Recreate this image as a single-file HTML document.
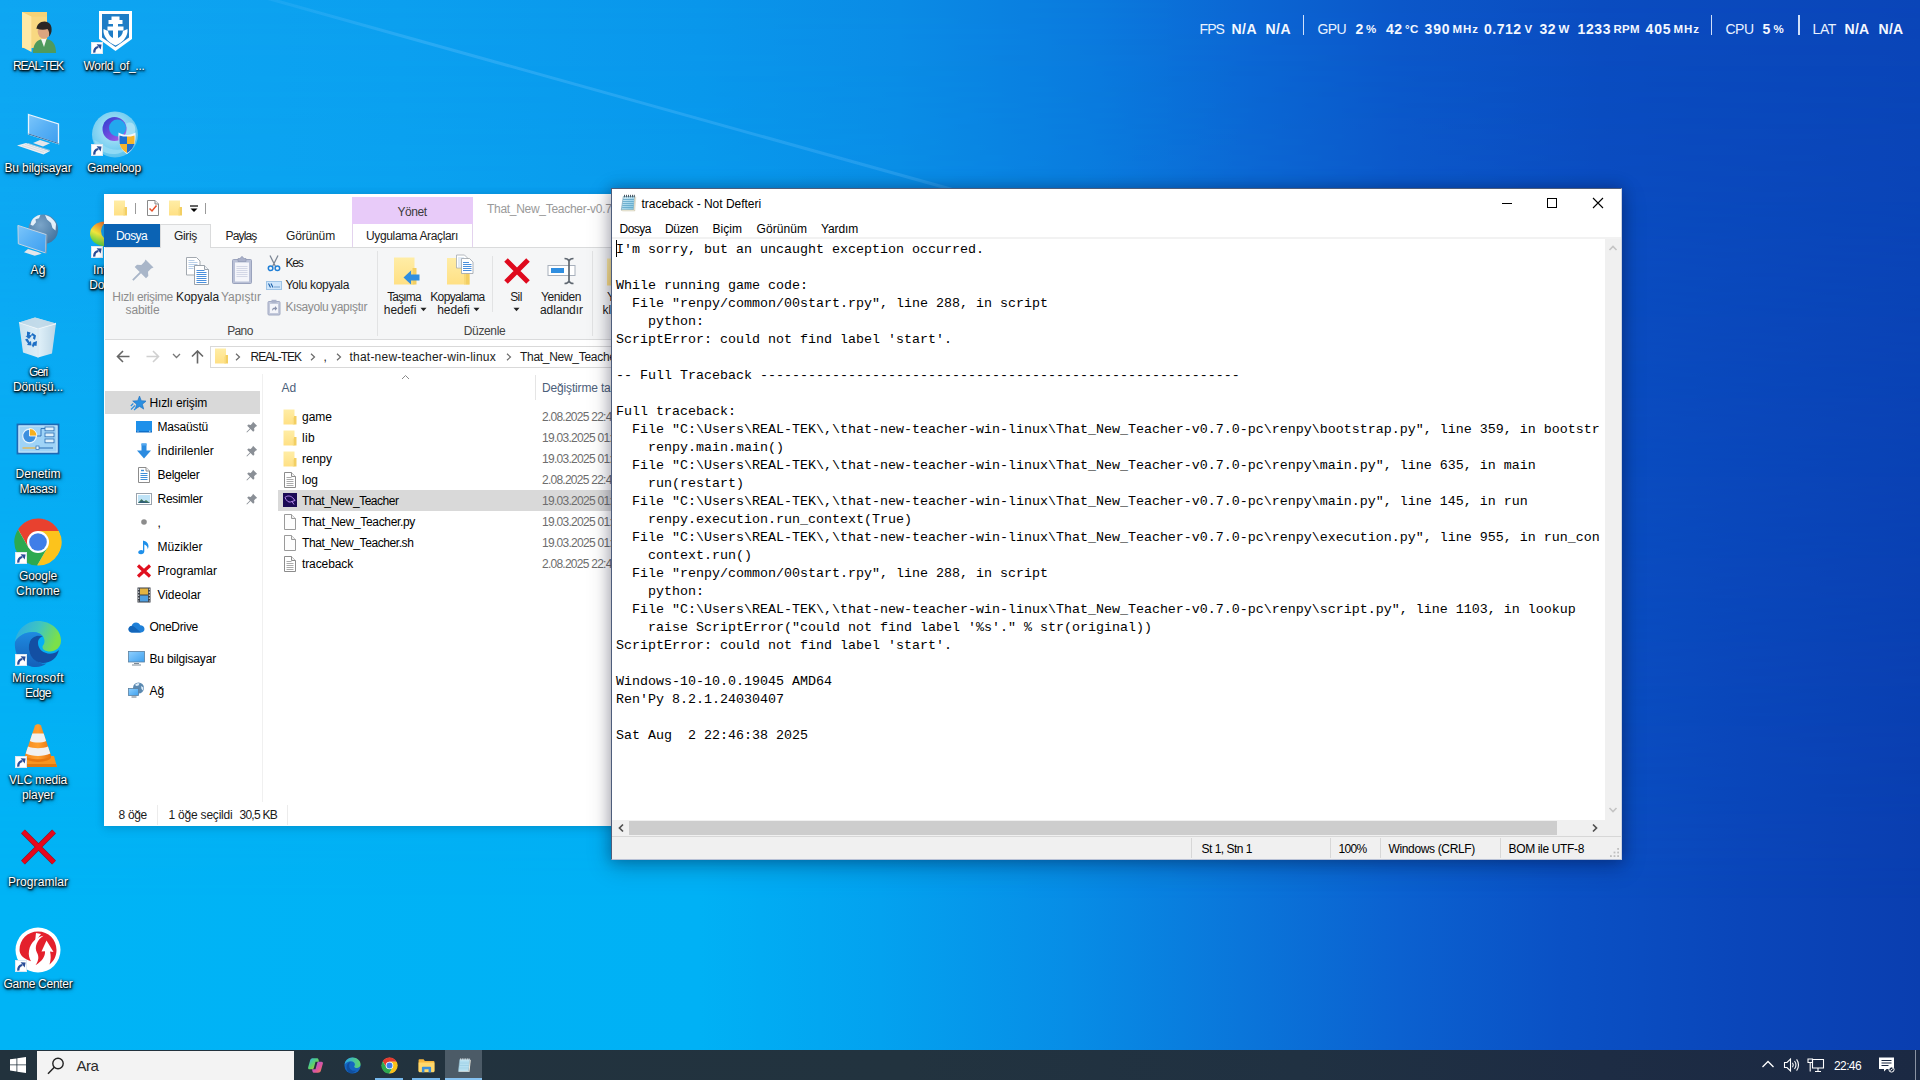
<!DOCTYPE html>
<html lang="tr">
<head>
<meta charset="utf-8">
<title>Masaüstü</title>
<style>
*{box-sizing:border-box;margin:0;padding:0}
html,body{width:1920px;height:1080px;overflow:hidden}
body{position:relative;font-family:"Liberation Sans",sans-serif;font-size:12px;color:#000;background:#0078d7}
.abs{position:absolute}
.t{position:absolute;white-space:pre;line-height:1}
#wall{position:absolute;left:0;top:0;width:1920px;height:1080px;overflow:hidden;
 background:linear-gradient(90deg,#00b4f6 0px,#00b1f5 700px,#03a2ef 880px,#078de6 1070px,#0a76da 1240px,#0b61d0 1400px,#0a51c5 1560px,#0a46ba 1740px,#0a3eb0 1920px)}
#wall .tint{position:absolute;left:0;top:0;width:1920px;height:1080px;
 background:linear-gradient(90deg,#0ea6f2 0px,#0b9fef 400px,#0996eb 700px,#0a8be5 900px,#0a79dd 1100px,#0b66d3 1250px,#0b57c9 1400px,#0a4cc0 1600px,#0a45b8 1920px);
 -webkit-mask-image:linear-gradient(180deg,#000 0px,rgba(0,0,0,.85) 200px,rgba(0,0,0,.35) 600px,rgba(0,0,0,0) 900px);mask-image:linear-gradient(180deg,#000 0px,rgba(0,0,0,.85) 200px,rgba(0,0,0,.35) 600px,rgba(0,0,0,0) 900px)}
#wall .ray{position:absolute;left:150px;top:-36px;width:1400px;height:3px;transform-origin:0 0;transform:rotate(15.6deg);
 background:linear-gradient(90deg,rgba(120,200,255,0),rgba(120,200,255,.28) 20%,rgba(120,200,255,.2) 70%,rgba(120,200,255,0))}
#np-text pre{position:absolute;left:3px;top:2px;font-family:"Liberation Mono",monospace;font-size:13.333px;line-height:18px;color:#000;white-space:pre}
.dl{position:absolute;width:90px;text-align:center;color:#fff;font-size:12px;line-height:15px;white-space:pre;
 text-shadow:0 1px 2px rgba(0,0,0,.95),1px 1px 2px rgba(0,0,0,.9),0 0 3px rgba(0,0,0,.55)}
#taskbar-bg{position:absolute;left:0;top:1050px;width:1920px;height:30px;
 background:linear-gradient(90deg,#22323d 0,#22333f 900px,#203142 1300px,#1d2c44 1600px,#1b2943 1920px)}
.dl2{text-shadow:0 1px 2px rgba(0,0,0,.95),1px 1px 2px rgba(0,0,0,.9),1px 2px 4px rgba(0,0,0,.6),0 0 3px rgba(0,0,0,.55)}

</style>
</head>
<body>
<svg width="0" height="0" style="position:absolute">
<defs>
<linearGradient id="gFold" x1="0" y1="0" x2="0" y2="1"><stop offset="0" stop-color="#ffedA6"/><stop offset="1" stop-color="#ffe084"/></linearGradient>
<linearGradient id="gMon" x1="0" y1="0" x2="1" y2="1"><stop offset="0" stop-color="#8ed0ff"/><stop offset="1" stop-color="#3fa0ee"/></linearGradient>
<symbol id="fold16" viewBox="0 0 14 16"><path d="M.5 .5h11v15H.5z" fill="url(#gFold)"/><path d="M11 7h2.500v8.500H11z" fill="#f3cf63"/><path d="M9.800 8.500H11v7H9.800z" fill="#f8dc80"/></symbol>
<symbol id="doc16" viewBox="0 0 14 16"><path d="M1.500 .5h7l4 4v11h-11z" fill="#fff" stroke="#8c8c8c"/><path d="M8.500 .5v4h4" fill="#f2f2f2" stroke="#8c8c8c"/><path d="M3.500 5.500h5M3.500 7.500h7M3.500 9.500h7M3.500 11.500h7M3.500 13.500h7" stroke="#a0a0a0" stroke-width=".9"/></symbol>
<symbol id="blank16" viewBox="0 0 14 16"><path d="M1.500 .5h7l4 4v11h-11z" fill="#fdfdfd" stroke="#9a9a9a"/><path d="M8.500 .5v4h4" fill="#eee" stroke="#9a9a9a"/></symbol>
<symbol id="pin12" viewBox="0 0 12 12"><path d="M7 .8l4.200 4.200-1.300.5-1.800 1.800.3 2.300-1.200 1.200L4.500 8.100 1 11.600.4 11l3.500-3.500L1.200 4.800l1.200-1.200 2.300.3L6.500 2.100z" fill="#8a8f96"/></symbol>
<symbol id="sc" viewBox="0 0 12 12"><rect x=".5" y=".5" width="11" height="11" fill="#fff" stroke="#dbe8f3"/><path d="M3.300 10.600C3.100 7.600 4.600 5.600 7.300 5" fill="none" stroke="#2a4d98" stroke-width="2.300"/><path d="M5.600 2.300l5 .2-.9 5z" fill="#2a4d98"/></symbol>
</defs></svg>
<div id="wall"><div class="tint"></div><div class="ray"></div></div>
<div id="desktop">
<svg class="abs" style="left:14px;top:8px" width="48" height="48" viewBox="0 0 48 48"><path d="M8 4h25v36H8z" fill="#f6d276"/><path d="M8 4l9.500 4.500V44L8 39z" fill="#ffe9a6"/><path d="M17.500 8.500H33V40H17.500z" fill="#f9dc8a" opacity=".55"/>
<path d="M19 45c0-8 3-14 11.500-14S42 37 42 45z" fill="#4f9a5c"/><path d="M27 31l3 8 2.500-8z" fill="#f4f4f0"/>
<g transform="translate(0 1.500)"><ellipse cx="30" cy="22" rx="6.300" ry="7.300" fill="#dca57f"/><path d="M22.500 20c0-5 3.500-8 8-8s8 3.500 7 10c-.8 3-1.500 4-2.500 5 .5-3 0-6-1.500-7.500-3 1-7 1-11-.5z" fill="#2a2624"/></g></svg>
<span class="t dl2" style="left:13.0px;top:60px;font-size:12px;letter-spacing:-1.09px;color:#fff;">REAL-TEK</span>
<svg class="abs" style="left:90px;top:8px" width="48" height="48" viewBox="0 0 48 48"><path d="M9 3h33v28L25.500 43 9 31z" fill="#fff"/><path d="M12 6h27v23.500L25.500 39 12 29.500z" fill="#1f7dc6"/>
<path d="M21.500 8.500h8v3.500h3v4h-4.500v2.500h5.500v4h-5.500v7.500c2.500-1 4.500-3.500 5-7l4.500-2v3c-1 6-5 10.500-12 13.500-7-3-11-7.500-12-13.500v-3l4.500 2c.5 3.500 2.500 6 5 7V22.500H17.500v-4H23V16h-4.500v-4h3z" fill="#fff"/></svg>
<svg class="abs" style="left:90.5px;top:42px" width="12" height="12"><use href="#sc"/></svg>
<span class="t dl2" style="left:83.5px;top:60px;font-size:12px;letter-spacing:-0.29px;color:#fff;">World_of_...</span>
<svg class="abs" style="left:14px;top:110px" width="48" height="48" viewBox="0 0 48 48"><defs><linearGradient id="pcg" x1="0" y1="0" x2="1" y2="1"><stop offset="0" stop-color="#7cc6fb"/><stop offset=".5" stop-color="#58b0f5"/><stop offset="1" stop-color="#3d9ff0"/></linearGradient></defs>
<path d="M14.500 4.500L44.500 14v19.500L14.500 24z" fill="url(#pcg)" stroke="#e9f4fc" stroke-width="1.300"/><path d="M14.500 24L44.500 33.500" stroke="#3a6fa3" stroke-width="1"/>
<path d="M26 30l10 3.200-7 3.300-10-3.500z" fill="#e4e6ea"/><path d="M12 33l24 8-6.500 3.500L3 35.500z" fill="#eceef1"/><path d="M8 35.500l22 7M11 34.300l22 7.200M14 33.500l22 7" stroke="#cfd3d8" stroke-width=".7"/></svg>
<span class="t dl2" style="left:4.5px;top:162px;font-size:12px;letter-spacing:-0.13px;color:#fff;">Bu bilgisayar</span>
<svg class="abs" style="left:90px;top:110px" width="48" height="48" viewBox="0 0 48 48"><defs><radialGradient id="glg" cx=".45" cy=".4" r=".6"><stop offset="0" stop-color="#bfeaf9"/><stop offset="1" stop-color="#5cc4ee"/></radialGradient><linearGradient id="glp" x1="0" y1="0" x2="1" y2="1"><stop offset="0" stop-color="#2a3fd0"/><stop offset=".6" stop-color="#7a4fe0"/><stop offset="1" stop-color="#b565e8"/></linearGradient></defs>
<circle cx="25" cy="24.500" r="23" fill="url(#glg)"/><path d="M4 30c2 8 10 14 19 14 6 0 11-2 14-6-8 3-18 2-24-3-3-2-6-4-9-5z" fill="#8fdaf5"/>
<circle cx="24.500" cy="19" r="12" fill="url(#glp)"/><circle cx="27.500" cy="18" r="8.500" fill="#23a8ee"/><path d="M36 14c4-3 8-1 9 3 1 5-1 9-5 12l-5-3c2-4 3-8 1-12z" fill="#a5e0f6"/>
<path d="M37 25c3 0 6-1 8.500-2.500 .7 10-2 17-8.500 21.500-6.500-4.500-9.200-11.500-8.500-21.500C31 24 34 25 37 25z" fill="#f3f6fa"/><path d="M37 26.500V34h-7.300c-.4-2.500-.4-5-.2-8.500 2.500 1 5 1 7.500 1zM37 34h7.300c-1 4-3.500 7-7.300 9z" fill="#1c6fd0"/><path d="M37 26.500c2.500 0 5 0 7.500-1 .2 3.500.2 6-.2 8.500H37zM37 34v9c-3.800-2-6.300-5-7.300-9z" fill="#f6b42c"/></svg>
<svg class="abs" style="left:90.5px;top:144px" width="12" height="12"><use href="#sc"/></svg>
<span class="t dl2" style="left:87.0px;top:162px;font-size:12px;letter-spacing:-0.17px;color:#fff;">Gameloop</span>
<svg class="abs" style="left:14px;top:212px" width="48" height="48" viewBox="0 0 48 48"><defs><radialGradient id="ngl" cx=".4" cy=".35" r=".75"><stop offset="0" stop-color="#7ba5c9"/><stop offset="1" stop-color="#3f6f9a"/></radialGradient></defs>
<circle cx="29.300" cy="17.400" r="14.800" fill="url(#ngl)"/><path d="M17.500 9c1.500-3 5-5.500 9-6.200l-1.500 3.500-3.500 1 .5 3-3 3.500-2.500-1zM31 3c5 1 9 4.500 11 9l-.5 6.500-3-2.500-1.500-5-4-3.500z" fill="#e3f0fa"/>
<path d="M3.900 13.400l28.400 9.200-.9 18.300L4.300 31.750z" fill="url(#pcg)" stroke="#c3d3e2" stroke-width="1"/><path d="M31.400 40.900l.9-18.300 1.200.6-.9 18.200z" fill="#7d97b3"/><path d="M14 37l10 3 3.700 1.700-7 2-10.700-3.500z" fill="#e4e6ea"/></svg>
<span class="t dl2" style="left:30.5px;top:264px;font-size:12px;letter-spacing:0.16px;color:#fff;">Ağ</span>
<svg class="abs" style="left:90px;top:212px" width="48" height="48" viewBox="0 0 48 48"><defs><linearGradient id="idg" x1=".8" y1="0" x2=".2" y2="1"><stop offset="0" stop-color="#e8482a"/><stop offset=".35" stop-color="#f0a030"/><stop offset=".6" stop-color="#efe63c"/><stop offset="1" stop-color="#35c545"/></linearGradient></defs><ellipse cx="15" cy="21.750" rx="15" ry="12.300" fill="url(#idg)"/><ellipse cx="16.500" cy="23.500" rx="12" ry="8" fill="#8fdc3c" opacity=".0"/><circle cx="20.500" cy="19" r="9.500" fill="#12a0ec"/><path d="M13 14c2-2 6-3 9-2l3 8-7 6c-3-1-5-3-6-6z" fill="#12a0ec"/></svg>
<svg class="abs" style="left:90.5px;top:246px" width="12" height="12"><use href="#sc"/></svg>
<span class="t dl2" style="left:93.0px;top:264px;font-size:12px;letter-spacing:0.16px;color:#fff;">Internet</span><span class="t dl2" style="left:89.2px;top:279px;font-size:12px;letter-spacing:-0.06px;color:#fff;">Downlo...</span>
<svg class="abs" style="left:14px;top:314px" width="48" height="48" viewBox="0 0 48 48"><defs><linearGradient id="bng" x1="0" y1="0" x2="1" y2="0"><stop offset="0" stop-color="#d9e6ef"/><stop offset=".55" stop-color="#eef4f8"/><stop offset="1" stop-color="#c9d9e5"/></linearGradient></defs>
<g transform="translate(0 -1.500) scale(1 1)"><path d="M5 10L21 5l21 6-4 30-14 4-15-5z" fill="url(#bng)" opacity=".93"/><path d="M5 10l19 6 18-5" fill="none" stroke="#f6fafc" stroke-width="1.300"/><path d="M24 16v29" stroke="#dbe6ee" stroke-width="1"/><path d="M5 10L21 5l21 6-18 5z" fill="#bcd6e6" opacity=".8"/>
<g fill="#1e6fc5"><path d="M13 19l3.500 1-1 2.500 2.500.5-3 3.500-3.500-3 1.500-.3zM18.500 20.500l3.500 2.500-1 4.500-2-1.500.5-2.500-2.500-1zM11 27l2.500-1 2 3.500 1.500-1 .5 4.500-4.500-.5 1-1.500zM18 33l1-3 4-1.500-.5 5-2-.5-1.500 2z"/></g></g></svg>
<span class="t dl2" style="left:29.0px;top:366px;font-size:12px;letter-spacing:-1.17px;color:#fff;">Geri</span><span class="t dl2" style="left:13.0px;top:381px;font-size:12px;letter-spacing:-0.15px;color:#fff;">Dönüşü...</span>
<svg class="abs" style="left:14px;top:416px" width="48" height="48" viewBox="0 0 48 48"><g transform="translate(0 4)"><rect x="3.500" y="4.500" width="41" height="29" fill="#9fd3f7" stroke="#1d69b5" stroke-width="1.800"/><rect x="5" y="6" width="38" height="26" fill="none" stroke="#c9e8fb" stroke-width="1"/>
<circle cx="15.500" cy="16" r="6.800" fill="#3c8fdf" stroke="#e8f4fc" stroke-width="1.200"/><path d="M15.500 16V8.500a7.500 7.500 0 0 1 7.500 7.500z" fill="#f6b01e" stroke="#fff" stroke-width=".8"/>
<path d="M23 16h4v-7.500h4" fill="none" stroke="#2a6eb5" stroke-width=".9"/><rect x="31" y="7" width="9" height="3.800" fill="#dff0fb" stroke="#2a6eb5" stroke-width=".8"/><rect x="31" y="13" width="9" height="3.800" fill="#dff0fb" stroke="#2a6eb5" stroke-width=".8"/><rect x="31" y="19" width="9" height="3.800" fill="#dff0fb" stroke="#2a6eb5" stroke-width=".8"/>
<path d="M8.500 28h14" stroke="#f0b23a" stroke-width="1.200"/><path d="M24 28h15" stroke="#2a6eb5" stroke-width="1"/><rect x="22" y="26" width="3" height="3.500" fill="#e8f4fc" stroke="#2a6eb5" stroke-width=".7"/></g></svg>
<span class="t dl2" style="left:15.5px;top:468px;font-size:12px;letter-spacing:0.04px;color:#fff;">Denetim</span><span class="t dl2" style="left:19.5px;top:483px;font-size:12px;letter-spacing:-0.28px;color:#fff;">Masası</span>
<svg class="abs" style="left:14px;top:518px" width="48" height="48" viewBox="0 0 48 48"><circle cx="24" cy="24" r="23" fill="#fff"/><path d="M14.474 29.500L4.091 11.515A23.500 23.500 0 0 1 44.767 13L24 13z" fill="#e8412f"/><path d="M24 13L44.767 13A23.500 23.500 0 0 1 23.143 47.485L33.526 29.500z" fill="#fcc31c"/><path d="M33.526 29.500L23.143 47.485A23.500 23.500 0 0 1 4.091 11.515L14.474 29.500z" fill="#2ca94f"/><circle cx="24" cy="24" r="11" fill="#fff"/><circle cx="24" cy="24" r="8.800" fill="#3f7ee8"/></svg>
<svg class="abs" style="left:14.5px;top:552px" width="12" height="12"><use href="#sc"/></svg>
<span class="t dl2" style="left:19.0px;top:570px;font-size:12px;letter-spacing:-0.12px;color:#fff;">Google</span><span class="t dl2" style="left:16.0px;top:585px;font-size:12px;letter-spacing:0.22px;color:#fff;">Chrome</span>
<svg class="abs" style="left:14px;top:620px" width="48" height="48" viewBox="0 0 48 48"><defs><linearGradient id="edg" x1="0" y1="0" x2="1" y2=".3"><stop offset="0" stop-color="#29a6ec"/><stop offset=".55" stop-color="#3fc6c0"/><stop offset="1" stop-color="#7be04a"/></linearGradient><linearGradient id="edb" x1="0" y1="0" x2="0" y2="1"><stop offset="0" stop-color="#1f8ae0"/><stop offset="1" stop-color="#1460b8"/></linearGradient></defs>
<path d="M1 22C2.500 10 12 1 24 1c13 0 23 9 23 19.500 0 7-5.500 11-11 11-5 0-7.500-2.300-7.500-4.500 0-1.800 2-2.500 2-6 0-5-4.500-9-11.500-9C11 12 4 16 1 22z" fill="url(#edg)"/>
<path d="M1 22c3-6 10-10 18-10 4.500 0 8 1.800 10 4.500-6-2-11.500.5-13.500 6-2 5.500.5 13 6.500 18 3 2.300 7 3.500 10.500 3-3 2.300-6.500 3.500-10.500 3.500C10 47-.5 36 1 22z" fill="url(#edb)"/>
<path d="M15.500 22.500c2-5.500 7.500-8 13.500-6-3 .5-5 3-5 6.500 0 7 7 11.500 14 10.500 3-.5 5.500-2 7-3.500-2 8-8 13-16 13-6 0-11-4-13-9.500-1.500-4-1.500-8-.5-11z" fill="#134fa3"/></svg>
<svg class="abs" style="left:14.5px;top:654px" width="12" height="12"><use href="#sc"/></svg>
<span class="t dl2" style="left:12.0px;top:672px;font-size:12px;letter-spacing:0.37px;color:#fff;">Microsoft</span><span class="t dl2" style="left:25.0px;top:687px;font-size:12px;letter-spacing:-0.51px;color:#fff;">Edge</span>
<svg class="abs" style="left:14px;top:722px" width="48" height="48" viewBox="0 0 48 48"><defs><linearGradient id="vlo" x1="0" y1="0" x2="1" y2="0"><stop offset="0" stop-color="#f58a1f"/><stop offset=".5" stop-color="#ff9f2e"/><stop offset="1" stop-color="#e8730f"/></linearGradient></defs>
<path d="M8 34l-3 11h38l-3-11z" fill="#f79420"/><path d="M5 45h38l-1-3H6z" fill="#e07a10"/><ellipse cx="24" cy="35" rx="13" ry="5" fill="#e8780f"/>
<path d="M21 3.500c1.500-1.800 4.500-1.800 6 0l10 30c-3 5-23 5-26 0z" fill="url(#vlo)"/><path d="M18.300 11.500h11.400l2.400 7.500c-4 2-12.200 2-16.200 0zM14 24.500c5 2.300 15 2.300 20 0l2.300 7c-6 3.300-18.600 3.300-24.600 0z" fill="#f1f1f1"/></svg>
<svg class="abs" style="left:14.5px;top:756px" width="12" height="12"><use href="#sc"/></svg>
<span class="t dl2" style="left:9.0px;top:774px;font-size:12px;letter-spacing:-0.15px;color:#fff;">VLC media</span><span class="t dl2" style="left:22.0px;top:789px;font-size:12px;letter-spacing:-0.11px;color:#fff;">player</span>
<svg class="abs" style="left:14px;top:824px" width="48" height="48" viewBox="0 0 48 48"><path d="M9 7.500l31 31M40 7.500l-31 31" stroke="#8a1828" stroke-width="5.400"/><path d="M9 7.500l31 31M40 7.500l-31 31" stroke="#e8061c" stroke-width="4.200"/></svg>
<span class="t dl2" style="left:8.0px;top:876px;font-size:12px;letter-spacing:0.06px;color:#fff;">Programlar</span>
<svg class="abs" style="left:14px;top:926px" width="48" height="48" viewBox="0 0 48 48"><circle cx="24" cy="24" r="22.500" fill="#fff"/><path d="M24 5.500c10.500 0 18.500 8 18.500 18.500 0 6-2.500 11-7 14.500 1.500-5 1.500-9 .5-13l3.500.5-7-11.500-5 11 3.500-.3c.5 5-3 10-9.500 14 3.500-5 3.500-9 1.500-12.500-3-5.500 0-13 6.500-17-6 1-13 6-14.500 15-.7 4 .3 7.500 2 10.500C10 33 5.500 29 5.500 24 5.500 13.500 13.500 5.500 24 5.500z" fill="#e4202c"/><path d="M22 7l5 1-6 8z" fill="#fff"/></svg>
<svg class="abs" style="left:14.5px;top:960px" width="12" height="12"><use href="#sc"/></svg>
<span class="t dl2" style="left:3.5px;top:978px;font-size:12px;letter-spacing:-0.28px;color:#fff;">Game Center</span>
</div>
<div id="explorer">
<div class="abs" style="left:104px;top:194px;width:640px;height:632px;background:#fff;box-shadow:0 0 8px rgba(0,0,40,.10),0 3px 10px rgba(0,0,40,.10);"></div>
<svg class="abs" style="left:113px;top:200px" width="15" height="16"><use href="#fold16"/></svg>
<div class="abs" style="left:135px;top:203px;width:1px;height:11px;background:#9a9a9a;"></div>
<svg class="abs" style="left:146px;top:200px" width="14" height="16" viewBox="0 0 14 16"><path d="M1.500 .5h7.500l3.500 3.500v11.500h-11z" fill="#fff" stroke="#8a8a8a"/><path d="M9 .5v3.500h3.500" fill="#eee" stroke="#8a8a8a"/><path d="M3.500 8.500l2.500 2.500 4.500-5.500" fill="none" stroke="#e8502a" stroke-width="1.5"/></svg>
<svg class="abs" style="left:168px;top:200px" width="15" height="16"><use href="#fold16"/></svg>
<svg class="abs" style="left:189px;top:205px" width="10" height="8" viewBox="0 0 10 8"><path d="M1 1h8" stroke="#000" stroke-width="1.2"/><path d="M1.500 3.500h7L5 7z" fill="#000"/></svg>
<div class="abs" style="left:205px;top:203px;width:1px;height:11px;background:#9a9a9a;"></div>
<div class="abs" style="left:352px;top:197px;width:121px;height:27px;background:#e8cbf9;"></div>
<span class="t" style="left:397.5px;top:206px;font-size:12px;letter-spacing:-0.47px;color:#3a3a3a;">Yönet</span>
<span class="t" style="left:487.0px;top:203px;font-size:12px;letter-spacing:-0.29px;color:#9a9a9a;">That_New_Teacher-v0.7.0-pc</span>
<div class="abs" style="left:104px;top:224px;width:56px;height:23px;background:#0b63b4;"></div>
<span class="t" style="left:116.0px;top:230px;font-size:12px;letter-spacing:-0.60px;color:#fff;">Dosya</span>
<div class="abs" style="left:105px;top:247px;width:640px;height:1px;background:#dadbdc;"></div>
<div class="abs" style="left:160px;top:224px;width:51px;height:24px;background:#f5f6f7;border:1px solid #dadbdc;border-bottom:none"></div>
<span class="t" style="left:174.0px;top:230px;font-size:12px;letter-spacing:-0.33px;color:#222;">Giriş</span>
<span class="t" style="left:225.5px;top:230px;font-size:12px;letter-spacing:-0.84px;color:#222;">Paylaş</span>
<span class="t" style="left:286.0px;top:230px;font-size:12px;letter-spacing:-0.15px;color:#222;">Görünüm</span>
<div class="abs" style="left:352px;top:224px;width:121px;height:23px;background:#fff;border-left:1px solid #e3d3ee;border-right:1px solid #e3d3ee"></div>
<span class="t" style="left:366.0px;top:230px;font-size:12px;letter-spacing:-0.36px;color:#222;">Uygulama Araçları</span>
<div class="abs" style="left:105px;top:248px;width:640px;height:91px;background:#f5f6f7;"></div>
<div class="abs" style="left:105px;top:339px;width:640px;height:1px;background:#dadbdc;"></div>
<svg class="abs" style="left:131px;top:258px" width="24" height="24" viewBox="0 0 24 24"><path d="M14.500 1.500l8 8-2.300 1-3.200 3.200.3 4.300-2.300 2.300-5-5L2.500 22.800 1.200 21.500l7.500-7.500-5-5L6 6.700l4.300.3L13.500 3.800z" fill="#a9b6c9"/></svg>
<span class="t" style="left:112.2px;top:291px;font-size:12px;letter-spacing:-0.42px;color:#8c8c8c;">Hızlı erişime</span>
<span class="t" style="left:125.5px;top:304px;font-size:12px;letter-spacing:-0.10px;color:#8c8c8c;">sabitle</span>
<svg class="abs" style="left:185px;top:256px" width="26" height="30" viewBox="0 0 26 30"><path d="M1.500 1.500h10l3.500 3.500v14h-13.500z" fill="#fff" stroke="#a3a9b0"/><path d="M3.500 6.500h9M3.500 8.500h9M3.500 10.500h9M3.500 12.500h5M3.500 4.500h6" stroke="#b9cfe8" stroke-width="1"/><path d="M9.500 9.500h10l4 4v15h-14z" fill="#fff" stroke="#9aa2ab"/><path d="M19.500 9.500v4h4" fill="#eef2f6" stroke="#9aa2ab"/><path d="M11.500 14.500h8M11.500 16.500h10M11.500 18.500h10M11.500 20.500h10M11.500 22.500h10M11.500 24.500h10M11.500 26.500h10" stroke="#4a8fdc" stroke-width="1.1"/></svg>
<span class="t" style="left:176.0px;top:291px;font-size:12px;letter-spacing:-0.05px;color:#1a1a1a;">Kopyala</span>
<svg class="abs" style="left:231px;top:255px" width="22" height="30" viewBox="0 0 22 30"><rect x="1.500" y="4.500" width="19" height="24" rx="1" fill="#b9c0d6" stroke="#9aa3bd"/><rect x="4" y="7.500" width="14" height="19" fill="#f4f5fa"/><path d="M5.500 11.500h11M5.500 13.500h11M5.500 15.500h11M5.500 17.500h11M5.500 19.500h11M5.500 21.500h11" stroke="#d3d7e6" stroke-width="1"/><path d="M7 3.500h2.500c0-2.500 3-2.500 3 0H15v3H7z" fill="#a9b0c9" stroke="#8f98b3" stroke-width=".7"/></svg>
<span class="t" style="left:221.0px;top:291px;font-size:12px;letter-spacing:-0.06px;color:#8c8c8c;">Yapıştır</span>
<svg class="abs" style="left:267px;top:255px" width="14" height="17" viewBox="0 0 14 17"><path d="M3 .5l5.500 11M11 .5L5.500 11.500" stroke="#7c8694" stroke-width="1.300" fill="none"/><circle cx="3.600" cy="13.300" r="2.300" fill="none" stroke="#1f7fd6" stroke-width="1.500"/><circle cx="10.400" cy="13.300" r="2.300" fill="none" stroke="#1f7fd6" stroke-width="1.500"/></svg>
<span class="t" style="left:285.5px;top:257px;font-size:12px;letter-spacing:-1.23px;color:#1a1a1a;">Kes</span>
<svg class="abs" style="left:266px;top:281px" width="16" height="9" viewBox="0 0 16 9"><rect x=".5" y=".5" width="15" height="8" fill="#cfe6fb" stroke="#9ec4e6"/><path d="M2.500 2.500l2 4M5 2.500l2 4" stroke="#1a5fa8" stroke-width="1.100"/><path d="M8.500 6h1M10.500 6h1M12.500 6h1" stroke="#1a5fa8" stroke-width="1.200"/></svg>
<span class="t" style="left:285.5px;top:279px;font-size:12px;letter-spacing:-0.34px;color:#1a1a1a;">Yolu kopyala</span>
<svg class="abs" style="left:267px;top:299px" width="14" height="17" viewBox="0 0 14 17"><rect x="1" y="2.500" width="12" height="13.500" rx="1" fill="#c3c9db" stroke="#a1a9c2"/><rect x="3" y="5" width="8" height="9" fill="#f4f5fa"/><rect x="4.500" y=".8" width="5" height="3" fill="#aab1c9"/><path d="M5 12c0-2.500 1-3.500 3-3.500V7l2.300 2.400L8 11.800v-1.500c-1.300 0-2.200.4-3 1.700z" fill="#8b93ad"/></svg>
<span class="t" style="left:285.5px;top:301px;font-size:12px;letter-spacing:-0.42px;color:#8c8c8c;">Kısayolu yapıştır</span>
<span class="t" style="left:227.2px;top:325px;font-size:12px;letter-spacing:-0.63px;color:#444;">Pano</span>
<div class="abs" style="left:377px;top:251px;width:1px;height:85px;background:#e2e3e4;"></div>
<svg class="abs" style="left:393px;top:256px" width="28" height="30" viewBox="0 0 28 30"><path d="M1 1.500h20.500v27H1z" fill="url(#gFold)"/><path d="M19.500 12h4v16.500h-4z" fill="#f3cf63"/><path d="M18 14h1.500v14.500H18z" fill="#f7d978"/><path d="M10.500 21.500l7.500-7v4h8.500v6H18v4z" fill="#2f8ee0"/></svg>
<span class="t" style="left:387.2px;top:291px;font-size:12px;letter-spacing:-0.86px;color:#1a1a1a;">Taşıma</span>
<span class="t" style="left:383.8px;top:304px;font-size:12px;letter-spacing:-0.03px;color:#1a1a1a;">hedefi</span>
<svg class="abs" style="left:420px;top:307px" width="7" height="5" viewBox="0 0 7 5"><path d="M.5 .8h6L3.500 4.300z" fill="#222"/></svg>
<svg class="abs" style="left:446px;top:254px" width="28" height="32" viewBox="0 0 28 32"><path d="M1 4h22.500v26.500H1z" fill="url(#gFold)"/><path d="M19.500 16h4v14.500h-4z" fill="#f3cf63"/><path d="M18 18h1.500v12.500H18z" fill="#f7d978"/><path d="M10.500 1h8l3 3v10h-11z" fill="#fff" stroke="#a3a9b0" stroke-width=".8"/><path d="M12 4h6M12 6h8M12 8h8M12 10h8M12 12h8" stroke="#c0d4ea" stroke-width=".9"/><path d="M15.500 4.500h8l3.500 3.500v11.500H15.500z" fill="#fff" stroke="#9aa2ab" stroke-width=".8"/><path d="M17 8.500h6M17 10.500h8.500M17 12.500h8.500M17 14.500h8.500M17 16.500h8.500" stroke="#4a8fdc" stroke-width="1"/></svg>
<span class="t" style="left:430.2px;top:291px;font-size:12px;letter-spacing:-0.62px;color:#1a1a1a;">Kopyalama</span>
<span class="t" style="left:437.2px;top:304px;font-size:12px;letter-spacing:-0.03px;color:#1a1a1a;">hedefi</span>
<svg class="abs" style="left:473px;top:307px" width="7" height="5" viewBox="0 0 7 5"><path d="M.5 .8h6L3.500 4.300z" fill="#222"/></svg>
<div class="abs" style="left:492px;top:256px;width:1px;height:56px;background:#e2e3e4;"></div>
<svg class="abs" style="left:503px;top:257px" width="28" height="28" viewBox="0 0 28 28"><path d="M3 3l22 22M25 3L3 25" stroke="#df0a1e" stroke-width="5"/></svg>
<span class="t" style="left:510.2px;top:291px;font-size:12px;letter-spacing:-0.61px;color:#1a1a1a;">Sil</span>
<svg class="abs" style="left:512.5px;top:307px" width="7" height="5" viewBox="0 0 7 5"><path d="M.5 .8h6L3.500 4.300z" fill="#222"/></svg>
<svg class="abs" style="left:547px;top:257px" width="30" height="28" viewBox="0 0 30 28"><rect x="1" y="8.500" width="27" height="10" fill="#fff" stroke="#a8b0bc"/><rect x="4" y="11" width="13" height="5" fill="#2f8ee0"/><path d="M17.500 1.500c3 0 4 1 4.500 2.500 .5-1.500 1.500-2.500 4.500-2.500M17.500 26.500c3 0 4-1 4.500-2.500 .5 1.500 1.500 2.500 4.500 2.500M22 4v20" fill="none" stroke="#5f6770" stroke-width="1.700"/></svg>
<span class="t" style="left:541.0px;top:291px;font-size:12px;letter-spacing:-0.42px;color:#1a1a1a;">Yeniden</span>
<span class="t" style="left:540.0px;top:304px;font-size:12px;letter-spacing:-0.05px;color:#1a1a1a;">adlandır</span>
<span class="t" style="left:463.8px;top:325px;font-size:12px;letter-spacing:-0.36px;color:#444;">Düzenle</span>
<div class="abs" style="left:592px;top:251px;width:1px;height:85px;background:#e2e3e4;"></div>
<svg class="abs" style="left:606px;top:257px" width="28" height="30" viewBox="0 0 28 30"><path d="M1 1.500h20.500v27H1z" fill="url(#gFold)"/><path d="M19.500 12h4v16.500h-4z" fill="#f3cf63"/></svg>
<span class="t" style="left:607.0px;top:291px;font-size:12px;color:#1a1a1a;">Yeni</span>
<span class="t" style="left:602.5px;top:304px;font-size:12px;color:#1a1a1a;">klasör</span>
<svg class="abs" style="left:116px;top:350px" width="14" height="13" viewBox="0 0 14 13"><path d="M7 1L1.500 6.500 7 12M1.500 6.500H13.500" fill="none" stroke="#666" stroke-width="1.600"/></svg>
<svg class="abs" style="left:146px;top:350px" width="14" height="13" viewBox="0 0 14 13"><path d="M7 1l5.500 5.500L7 12M12.500 6.500H.5" fill="none" stroke="#d0d0d0" stroke-width="1.600"/></svg>
<svg class="abs" style="left:172px;top:353px" width="9" height="6" viewBox="0 0 9 6"><path d="M1 1l3.500 3.500L8 1" fill="none" stroke="#777" stroke-width="1.300"/></svg>
<svg class="abs" style="left:191px;top:350px" width="13" height="14" viewBox="0 0 13 14"><path d="M1 6.500L6.500 1 12 6.500M6.500 1v12.500" fill="none" stroke="#666" stroke-width="1.600"/></svg>
<div class="abs" style="left:210px;top:346px;width:540px;height:22px;background:#fff;border:1px solid #d9d9d9"></div>
<svg class="abs" style="left:214px;top:348px" width="15" height="16"><use href="#fold16"/></svg>
<svg class="abs" style="left:235px;top:353px" width="6" height="8" viewBox="0 0 6 8"><path d="M1 .8l3.500 3.200L1 7.200" fill="none" stroke="#6a6a6a" stroke-width="1.200"/></svg>
<svg class="abs" style="left:310px;top:353px" width="6" height="8" viewBox="0 0 6 8"><path d="M1 .8l3.500 3.200L1 7.200" fill="none" stroke="#6a6a6a" stroke-width="1.200"/></svg>
<svg class="abs" style="left:335.5px;top:353px" width="6" height="8" viewBox="0 0 6 8"><path d="M1 .8l3.500 3.200L1 7.200" fill="none" stroke="#6a6a6a" stroke-width="1.200"/></svg>
<svg class="abs" style="left:506px;top:353px" width="6" height="8" viewBox="0 0 6 8"><path d="M1 .8l3.500 3.200L1 7.200" fill="none" stroke="#6a6a6a" stroke-width="1.200"/></svg>
<span class="t" style="left:250.5px;top:351px;font-size:12px;letter-spacing:-1.02px;color:#1a1a1a;">REAL-TEK</span>
<span class="t" style="left:323.5px;top:351px;font-size:12px;color:#1a1a1a;">,</span>
<span class="t" style="left:349.5px;top:351px;font-size:12px;letter-spacing:0.22px;color:#1a1a1a;">that-new-teacher-win-linux</span>
<span class="t" style="left:520.0px;top:351px;font-size:12px;letter-spacing:-0.29px;color:#1a1a1a;">That_New_Teacher-v0.7.0-pc</span>
<div class="abs" style="left:105px;top:391px;width:155px;height:23px;background:#d9d9d9;"></div>
<div class="abs" style="left:262px;top:374px;width:1px;height:428px;background:#f0f0f0;"></div>
<svg class="abs" style="left:130px;top:395px" width="16" height="16" viewBox="0 0 16 16"><path d="M9.500 1l1.800 4.700 5 .3-3.900 3.200 1.300 4.900-4.200-2.700-4.200 2.700 1.300-4.900L2.700 6l5-.3z" fill="#2b8fe0" stroke="#1c6fc0" stroke-width=".6"/><path d="M1 14.500l4-4M.8 11l2.500-2.500M4 15l2.200-2.200" stroke="#2b8fe0" stroke-width="1.100"/></svg>
<span class="t" style="left:149.5px;top:397px;font-size:12px;letter-spacing:-0.15px;color:#000;">Hızlı erişim</span>
<svg class="abs" style="left:136px;top:419px" width="16" height="16" viewBox="0 0 16 16"><rect x="0" y="2" width="16" height="11" fill="#1e90ea"/><rect x="0" y="12" width="16" height="1.500" fill="#0f6fc8"/><path d="M1.500 12.200h1M13 12.200h1.500" stroke="#fff" stroke-width=".8"/></svg>
<span class="t" style="left:157.5px;top:421px;font-size:12px;letter-spacing:-0.19px;color:#000;">Masaüstü</span>
<svg class="abs" style="left:246px;top:421px" width="12" height="12"><use href="#pin12"/></svg>
<svg class="abs" style="left:136px;top:443px" width="16" height="16" viewBox="0 0 16 16"><path d="M5.500 .5h5v7h4.500L8 15.500 1 7.500h4.500z" fill="#2b8be0"/><path d="M5.500 .5h5v2h-5z" fill="#55a8f0"/></svg>
<span class="t" style="left:157.5px;top:445px;font-size:12px;letter-spacing:0.09px;color:#000;">İndirilenler</span>
<svg class="abs" style="left:246px;top:445px" width="12" height="12"><use href="#pin12"/></svg>
<svg class="abs" style="left:136px;top:467px" width="16" height="16" viewBox="0 0 16 16"><path d="M2.500 .5h7.500l3.500 3.500v11.500h-11z" fill="#fff" stroke="#8c8c8c"/><path d="M10 .5v3.500h3.500" fill="#f2f2f2" stroke="#8c8c8c"/><path d="M4.500 6.500h7M4.500 8.500h7M4.500 10.500h7M4.500 12.500h7" stroke="#3f8fd8" stroke-width="1"/><path d="M5 3.500h3" stroke="#3f8fd8" stroke-width="1.400"/></svg>
<span class="t" style="left:157.5px;top:469px;font-size:12px;letter-spacing:-0.25px;color:#000;">Belgeler</span>
<svg class="abs" style="left:246px;top:469px" width="12" height="12"><use href="#pin12"/></svg>
<svg class="abs" style="left:136px;top:491px" width="16" height="16" viewBox="0 0 16 16"><rect x=".5" y="2.500" width="15" height="11" fill="#fff" stroke="#9aa3ad"/><rect x="2" y="4" width="12" height="8" fill="#bfe3f7"/><path d="M2 12l3.500-4 2.500 2.500 2-1.500 4 3z" fill="#4b7f5a"/><path d="M2 12l3.500-2.500L14 12z" fill="#2f5f76"/></svg>
<span class="t" style="left:157.5px;top:493px;font-size:12px;letter-spacing:-0.29px;color:#000;">Resimler</span>
<svg class="abs" style="left:246px;top:493px" width="12" height="12"><use href="#pin12"/></svg>
<svg class="abs" style="left:136px;top:515px" width="16" height="16" viewBox="0 0 16 16"><circle cx="8" cy="7" r="2.800" fill="#8c8c8c"/></svg>
<span class="t" style="left:157.5px;top:517px;font-size:12px;color:#000;">,</span>
<svg class="abs" style="left:136px;top:539px" width="16" height="16" viewBox="0 0 16 16"><path d="M7 1.500c1 .3 5.500 1.500 5.500 5.500 0 1.500-.5 2.500-1 3 .3-2-1-4-3.200-4.600V12.500c0 1.500-1.500 2.800-3.300 2.800S2.200 14.500 2.200 13.300 3.500 11 5.200 11c.6 0 1.300.2 1.800.5z" fill="#1e90ea"/></svg>
<span class="t" style="left:157.5px;top:541px;font-size:12px;letter-spacing:0.04px;color:#000;">Müzikler</span>
<svg class="abs" style="left:136px;top:563px" width="16" height="16" viewBox="0 0 16 16"><path d="M2 2.500l12 11M14 2.500l-12 11" stroke="#e0101f" stroke-width="3.200"/></svg>
<span class="t" style="left:157.5px;top:565px;font-size:12px;letter-spacing:0.01px;color:#000;">Programlar</span>
<svg class="abs" style="left:136px;top:587px" width="16" height="16" viewBox="0 0 16 16"><rect x="1.500" y=".5" width="13" height="15" fill="#3a3f47"/><rect x="4" y="1.500" width="8" height="6" fill="#e3b341"/><rect x="4" y="8.500" width="8" height="6" fill="#4f9fe0"/><path d="M2.700 1.500v13M13.300 1.500v13" stroke="#d8dce0" stroke-width="1" stroke-dasharray="1.500 1.500"/></svg>
<span class="t" style="left:157.5px;top:589px;font-size:12px;letter-spacing:-0.04px;color:#000;">Videolar</span>
<svg class="abs" style="left:128px;top:620px" width="17" height="13" viewBox="0 0 17 13"><path d="M4 12.500c-2 0-3.500-1.300-3.500-3.200 0-1.700 1.300-3 3-3.200C4 4 5.800 2.500 8 2.500c2 0 3.600 1.100 4.300 2.800 2.300 0 4.200 1.500 4.200 3.700 0 2-1.600 3.500-3.700 3.500z" fill="#1f80d8"/><path d="M4 12.500c-2 0-3.500-1.300-3.500-3.200 0-1.700 1.300-3 3-3.200 1-.2 2.200.2 3 .8l6.500 5.600z" fill="#1466ba"/></svg>
<span class="t" style="left:149.5px;top:621px;font-size:12px;letter-spacing:-0.27px;color:#000;">OneDrive</span>
<svg class="abs" style="left:128px;top:651px" width="17" height="15" viewBox="0 0 17 15"><rect x=".5" y=".5" width="16" height="10.500" fill="url(#gMon)" stroke="#5a7fa0" stroke-width=".8"/><path d="M6 12.500h5M4 14h9" stroke="#7d8a96" stroke-width="1.200"/></svg>
<span class="t" style="left:149.5px;top:653px;font-size:12px;letter-spacing:-0.17px;color:#000;">Bu bilgisayar</span>
<svg class="abs" style="left:128px;top:682px" width="17" height="16" viewBox="0 0 17 16"><circle cx="10.500" cy="6" r="5.500" fill="#5b89b0"/><path d="M7 3c1-1.500 3-2 4.500-1.500l-1 2-2 .5zM13 4l2.500 1.500-.5 3-1.500-1.500z" fill="#dfeefa"/><rect x=".5" y="6.500" width="10" height="7" fill="url(#gMon)" stroke="#5a7fa0" stroke-width=".8"/><path d="M3.500 15h5" stroke="#7d8a96" stroke-width="1.200"/></svg>
<span class="t" style="left:149.5px;top:685px;font-size:12px;letter-spacing:-0.09px;color:#000;">Ağ</span>
<span class="t" style="left:281.5px;top:382px;font-size:12px;letter-spacing:-0.09px;color:#4c607a;">Ad</span>
<svg class="abs" style="left:401px;top:374px" width="9" height="6" viewBox="0 0 9 6"><path d="M1 5l3.500-3.500L8 5" fill="none" stroke="#8a8a8a" stroke-width="1"/></svg>
<div class="abs" style="left:535px;top:375px;width:1px;height:25px;background:#e5e5e5;"></div>
<span class="t" style="left:542.0px;top:382px;font-size:12px;letter-spacing:-0.16px;color:#4c607a;">Değiştirme tarihi</span>
<div class="abs" style="left:278px;top:490px;width:470px;height:21px;background:#d9d9d9;"></div>
<svg class="abs" style="left:283px;top:408.5px" width="14" height="16"><use href="#fold16"/></svg>
<span class="t" style="left:302.0px;top:411px;font-size:12px;letter-spacing:-0.00px;color:#000;">game</span>
<span class="t" style="left:542.0px;top:411px;font-size:12px;letter-spacing:-0.75px;color:#6d6d6d;">2.08.2025 22:46</span>
<svg class="abs" style="left:283px;top:429.5px" width="14" height="16"><use href="#fold16"/></svg>
<span class="t" style="left:302.0px;top:432px;font-size:12px;letter-spacing:0.33px;color:#000;">lib</span>
<span class="t" style="left:542.0px;top:432px;font-size:12px;letter-spacing:-0.71px;color:#6d6d6d;">19.03.2025 01:14</span>
<svg class="abs" style="left:283px;top:450.5px" width="14" height="16"><use href="#fold16"/></svg>
<span class="t" style="left:302.0px;top:453px;font-size:12px;letter-spacing:-0.00px;color:#000;">renpy</span>
<span class="t" style="left:542.0px;top:453px;font-size:12px;letter-spacing:-0.71px;color:#6d6d6d;">19.03.2025 01:14</span>
<svg class="abs" style="left:283px;top:471.5px" width="14" height="16"><use href="#doc16"/></svg>
<span class="t" style="left:302.0px;top:474px;font-size:12px;letter-spacing:-0.00px;color:#000;">log</span>
<span class="t" style="left:542.0px;top:474px;font-size:12px;letter-spacing:-0.75px;color:#6d6d6d;">2.08.2025 22:46</span>
<svg class="abs" style="left:283px;top:493.0px" width="14" height="14" viewBox="0 0 14 14"><rect width="14" height="14" fill="#1b0a55"/><path d="M2 4.500c2-2 5-2 7.500 0l2.500 3-4.500 1.500c-2 .5-4-1-5.500-4.500zM9 8.500l2 3" fill="none" stroke="#b88cf0" stroke-width="1"/></svg>
<span class="t" style="left:302.0px;top:495px;font-size:12px;letter-spacing:-0.47px;color:#000;">That_New_Teacher</span>
<span class="t" style="left:542.0px;top:495px;font-size:12px;letter-spacing:-0.71px;color:#6d6d6d;">19.03.2025 01:14</span>
<svg class="abs" style="left:283px;top:513.5px" width="14" height="16"><use href="#blank16"/></svg>
<span class="t" style="left:302.0px;top:516px;font-size:12px;letter-spacing:-0.34px;color:#000;">That_New_Teacher.py</span>
<span class="t" style="left:542.0px;top:516px;font-size:12px;letter-spacing:-0.71px;color:#6d6d6d;">19.03.2025 01:14</span>
<svg class="abs" style="left:283px;top:534.5px" width="14" height="16"><use href="#blank16"/></svg>
<span class="t" style="left:302.0px;top:537px;font-size:12px;letter-spacing:-0.42px;color:#000;">That_New_Teacher.sh</span>
<span class="t" style="left:542.0px;top:537px;font-size:12px;letter-spacing:-0.71px;color:#6d6d6d;">19.03.2025 01:14</span>
<svg class="abs" style="left:283px;top:555.5px" width="14" height="16"><use href="#doc16"/></svg>
<span class="t" style="left:302.0px;top:558px;font-size:12px;letter-spacing:-0.11px;color:#000;">traceback</span>
<span class="t" style="left:542.0px;top:558px;font-size:12px;letter-spacing:-0.75px;color:#6d6d6d;">2.08.2025 22:46</span>
<span class="t" style="left:118.5px;top:809px;font-size:12px;letter-spacing:-0.31px;color:#1a1a1a;">8 öğe</span>
<div class="abs" style="left:157px;top:805px;width:1px;height:20px;background:#ececec;"></div>
<span class="t" style="left:168.5px;top:809px;font-size:12px;letter-spacing:-0.21px;color:#1a1a1a;">1 öğe seçildi</span>
<span class="t" style="left:239.5px;top:809px;font-size:12px;letter-spacing:-0.74px;color:#1a1a1a;">30,5 KB</span>
<div class="abs" style="left:287px;top:805px;width:1px;height:20px;background:#ececec;"></div>
</div>
<div id="notepad">
<div class="abs" style="left:611px;top:188px;width:1011px;height:672px;background:#fff;border:1px solid rgba(20,40,80,.75);border-right-color:rgba(20,50,120,.22);border-bottom-color:rgba(20,50,120,.3);box-shadow:0 0 12px 1px rgba(0,0,30,.22),0 6px 22px rgba(0,0,30,.26);"></div>
<svg class="abs" style="left:620px;top:194px" width="17" height="18" viewBox="0 0 17 18"><defs><linearGradient id="npg" x1="0" y1="0" x2="1" y2="1"><stop offset="0" stop-color="#d4eef8"/><stop offset="1" stop-color="#7cc0de"/></linearGradient></defs><path d="M3.300 2.500h11.500l-1 13.500H1.300z" fill="url(#npg)" stroke="#7aa3b8" stroke-width=".7"/><path d="M13.800 16l1-13.500 1 1-1 13.500z" fill="#f2ecdc" stroke="#c8bfa5" stroke-width=".4"/><path d="M1.300 16h12.500l1 1H2.300z" fill="#f7f3e7" stroke="#c8bfa5" stroke-width=".4"/><path d="M3 5.500h11M2.800 7.500h11M2.600 9.500h11M2.400 11.500h11M2.200 13.500h11" stroke="#5fa6c8" stroke-width=".8"/><path d="M4.500 .8v2.500M6.500 .8v2.500M8.500 .8v2.500M10.500 .8v2.500M12.500 .8v2.500M14.300 .8v2.500" stroke="#4a5a66" stroke-width="1"/></svg>
<span class="t" style="left:641.5px;top:198px;font-size:12px;letter-spacing:-0.02px;color:#000;">traceback - Not Defteri</span>
<svg class="abs" style="left:1501px;top:197px" width="12" height="12" viewBox="0 0 12 12"><path d="M1 6.500h10" stroke="#000" stroke-width="1"/></svg>
<svg class="abs" style="left:1546px;top:197px" width="12" height="12" viewBox="0 0 12 12"><rect x="1.500" y="1.500" width="9" height="9" fill="none" stroke="#000" stroke-width="1"/></svg>
<svg class="abs" style="left:1592px;top:197px" width="12" height="12" viewBox="0 0 12 12"><path d="M1 1l10 10M11 1L1 11" stroke="#000" stroke-width="1.100"/></svg>
<span class="t" style="left:619.5px;top:223px;font-size:12px;letter-spacing:-0.50px;color:#000;">Dosya</span>
<span class="t" style="left:665.0px;top:223px;font-size:12px;letter-spacing:-0.34px;color:#000;">Düzen</span>
<span class="t" style="left:712.5px;top:223px;font-size:12px;letter-spacing:0.03px;color:#000;">Biçim</span>
<span class="t" style="left:756.5px;top:223px;font-size:12px;letter-spacing:0.07px;color:#000;">Görünüm</span>
<span class="t" style="left:821.0px;top:223px;font-size:12px;letter-spacing:-0.13px;color:#000;">Yardım</span>
<div class="abs" style="left:612px;top:237px;width:1009px;height:2px;background:#f2f2f2;"></div>
<div class="abs" id="np-text" style="left:613px;top:239px;width:987px;height:580px;overflow:hidden"><pre>I'm sorry, but an uncaught exception occurred.

While running game code:
  File "renpy/common/00start.rpy", line 288, in script
    python:
ScriptError: could not find label 'start'.

-- Full Traceback ------------------------------------------------------------

Full traceback:
  File "C:\Users\REAL-TEK\,\that-new-teacher-win-linux\That_New_Teacher-v0.7.0-pc\renpy\bootstrap.py", line 359, in bootstrap
    renpy.main.main()
  File "C:\Users\REAL-TEK\,\that-new-teacher-win-linux\That_New_Teacher-v0.7.0-pc\renpy\main.py", line 635, in main
    run(restart)
  File "C:\Users\REAL-TEK\,\that-new-teacher-win-linux\That_New_Teacher-v0.7.0-pc\renpy\main.py", line 145, in run
    renpy.execution.run_context(True)
  File "C:\Users\REAL-TEK\,\that-new-teacher-win-linux\That_New_Teacher-v0.7.0-pc\renpy\execution.py", line 955, in run_context
    context.run()
  File "renpy/common/00start.rpy", line 288, in script
    python:
  File "C:\Users\REAL-TEK\,\that-new-teacher-win-linux\That_New_Teacher-v0.7.0-pc\renpy\script.py", line 1103, in lookup
    raise ScriptError("could not find label '%s'." % str(original))
ScriptError: could not find label 'start'.

Windows-10-10.0.19045 AMD64
Ren'Py 8.2.1.24030407

Sat Aug  2 22:46:38 2025</pre></div>
<div class="abs" style="left:616px;top:240px;width:1px;height:17px;background:#000;"></div>
<div class="abs" style="left:1605px;top:239px;width:16px;height:581px;background:#f0f0f0;"></div>
<svg class="abs" style="left:1608px;top:244px" width="10" height="8" viewBox="0 0 10 8"><path d="M1.500 6l3.500-3.500L8.500 6" fill="none" stroke="#c4c4c4" stroke-width="1.600"/></svg>
<svg class="abs" style="left:1608px;top:806px" width="10" height="8" viewBox="0 0 10 8"><path d="M1.500 2l3.500 3.500L8.500 2" fill="none" stroke="#c4c4c4" stroke-width="1.600"/></svg>
<div class="abs" style="left:612px;top:820px;width:1009px;height:17px;background:#f0f0f0;"></div>
<div class="abs" style="left:629px;top:821px;width:928px;height:14px;background:#cdcdcd;"></div>
<svg class="abs" style="left:617px;top:823px" width="8" height="10" viewBox="0 0 8 10"><path d="M6 1.500L2.500 5 6 8.500" fill="none" stroke="#505050" stroke-width="1.700"/></svg>
<svg class="abs" style="left:1591px;top:823px" width="8" height="10" viewBox="0 0 8 10"><path d="M2 1.500L5.500 5 2 8.500" fill="none" stroke="#505050" stroke-width="1.700"/></svg>
<div class="abs" style="left:612px;top:836px;width:1009px;height:23px;background:#f0f0f0;border-top:1px solid #d7d7d7"></div>
<div class="abs" style="left:1191px;top:838px;width:1px;height:20px;background:#d7d7d7;"></div>
<div class="abs" style="left:1330px;top:838px;width:1px;height:20px;background:#d7d7d7;"></div>
<div class="abs" style="left:1380px;top:838px;width:1px;height:20px;background:#d7d7d7;"></div>
<div class="abs" style="left:1500px;top:838px;width:1px;height:20px;background:#d7d7d7;"></div>
<span class="t" style="left:1201.5px;top:843px;font-size:12px;letter-spacing:-0.50px;color:#000;">St 1, Stn 1</span>
<span class="t" style="left:1338.5px;top:843px;font-size:12px;letter-spacing:-0.67px;color:#000;">100%</span>
<span class="t" style="left:1388.5px;top:843px;font-size:12px;letter-spacing:-0.35px;color:#000;">Windows (CRLF)</span>
<span class="t" style="left:1508.5px;top:843px;font-size:12px;letter-spacing:-0.35px;color:#000;">BOM ile UTF-8</span>
<svg class="abs" style="left:1610px;top:848px" width="9" height="9" viewBox="0 0 10 10"><g fill="#bfbfbf"><rect x="8" y="0" width="2" height="2"/><rect x="4" y="4" width="2" height="2"/><rect x="8" y="4" width="2" height="2"/><rect x="0" y="8" width="2" height="2"/><rect x="4" y="8" width="2" height="2"/><rect x="8" y="8" width="2" height="2"/></g></svg>
</div>
<div id="overlay">
<span class="t" style="left:1199.5px;top:22px;font-size:14px;letter-spacing:-0.91px;color:#e9f2ff;">FPS</span>
<span class="t" style="left:1231.5px;top:22px;font-size:14px;letter-spacing:0.46px;color:#f4f8ff;font-weight:bold;">N/A</span>
<span class="t" style="left:1265.5px;top:22px;font-size:14px;letter-spacing:0.46px;color:#f4f8ff;font-weight:bold;">N/A</span>
<div class="abs" style="left:1302.5px;top:15px;width:1.5px;height:20px;background:rgba(230,240,255,.9);"></div>
<span class="t" style="left:1317.5px;top:22px;font-size:14px;letter-spacing:-0.61px;color:#e9f2ff;">GPU</span>
<span class="t" style="left:1355.5px;top:22px;font-size:14px;color:#f4f8ff;font-weight:bold;">2</span>
<span class="t" style="left:1366.0px;top:24px;font-size:11.5px;color:#f4f8ff;font-weight:bold;">%</span>
<span class="t" style="left:1386.0px;top:22px;font-size:14px;letter-spacing:0.46px;color:#f4f8ff;font-weight:bold;">42</span>
<span class="t" style="left:1405.0px;top:24px;font-size:11.5px;letter-spacing:0.30px;color:#f4f8ff;font-weight:bold;">°C</span>
<span class="t" style="left:1424.5px;top:22px;font-size:14px;letter-spacing:0.88px;color:#f4f8ff;font-weight:bold;">390</span>
<span class="t" style="left:1452.5px;top:24px;font-size:11.5px;letter-spacing:0.95px;color:#f4f8ff;font-weight:bold;">MHz</span>
<span class="t" style="left:1484.0px;top:22px;font-size:14px;letter-spacing:0.49px;color:#f4f8ff;font-weight:bold;">0.712</span>
<span class="t" style="left:1524.5px;top:24px;font-size:11.5px;color:#f4f8ff;font-weight:bold;">V</span>
<span class="t" style="left:1539.5px;top:22px;font-size:14px;letter-spacing:0.46px;color:#f4f8ff;font-weight:bold;">32</span>
<span class="t" style="left:1558.5px;top:24px;font-size:11.5px;color:#f4f8ff;font-weight:bold;">W</span>
<span class="t" style="left:1577.5px;top:22px;font-size:14px;letter-spacing:0.59px;color:#f4f8ff;font-weight:bold;">1233</span>
<span class="t" style="left:1613.5px;top:24px;font-size:11.5px;letter-spacing:0.31px;color:#f4f8ff;font-weight:bold;">RPM</span>
<span class="t" style="left:1645.5px;top:22px;font-size:14px;letter-spacing:0.88px;color:#f4f8ff;font-weight:bold;">405</span>
<span class="t" style="left:1673.5px;top:24px;font-size:11.5px;letter-spacing:0.95px;color:#f4f8ff;font-weight:bold;">MHz</span>
<div class="abs" style="left:1710.5px;top:15px;width:1.5px;height:20px;background:rgba(230,240,255,.9);"></div>
<span class="t" style="left:1725.5px;top:22px;font-size:14px;letter-spacing:-0.52px;color:#e9f2ff;">CPU</span>
<span class="t" style="left:1762.5px;top:22px;font-size:14px;color:#f4f8ff;font-weight:bold;">5</span>
<span class="t" style="left:1773.5px;top:24px;font-size:11.5px;color:#f4f8ff;font-weight:bold;">%</span>
<div class="abs" style="left:1798px;top:15px;width:1.5px;height:20px;background:rgba(230,240,255,.9);"></div>
<span class="t" style="left:1812.5px;top:22px;font-size:14px;letter-spacing:-0.38px;color:#e9f2ff;">LAT</span>
<span class="t" style="left:1844.5px;top:22px;font-size:14px;letter-spacing:0.30px;color:#f4f8ff;font-weight:bold;">N/A</span>
<span class="t" style="left:1878.5px;top:22px;font-size:14px;letter-spacing:0.30px;color:#f4f8ff;font-weight:bold;">N/A</span>
</div>
<div id="taskbar">
<div id="taskbar-bg"></div>
<svg class="abs" style="left:10px;top:1057px" width="16" height="16" viewBox="0 0 16 16"><path d="M0 2.300l6.500-.9v6.100H0zM7.300 1.300L16 0v7.500H7.300zM0 8.300h6.500v6.100L0 13.500zM7.300 8.300H16V16l-8.700-1.200z" fill="#fff"/></svg>
<div class="abs" style="left:37px;top:1051px;width:257px;height:29px;background:#f3f3f3;"></div>
<svg class="abs" style="left:47px;top:1057px" width="18" height="18" viewBox="0 0 18 18"><circle cx="11" cy="6.500" r="5.200" fill="none" stroke="#222" stroke-width="1.400"/><path d="M7.300 10.300L1 16.800" stroke="#222" stroke-width="1.500"/></svg>
<span class="t" style="left:76.5px;top:1058px;font-size:15px;letter-spacing:-0.45px;color:#2a2a2a;">Ara</span>
<div class="abs" style="left:445px;top:1050px;width:37px;height:30px;background:#4c5b67;"></div>
<div class="abs" style="left:375px;top:1078px;width:28px;height:2px;background:#76b9ed;"></div>
<div class="abs" style="left:412px;top:1078px;width:28px;height:2px;background:#76b9ed;"></div>
<div class="abs" style="left:445px;top:1078px;width:37px;height:2px;background:#86c3f2;"></div>
<svg class="abs" style="left:306.5px;top:1056.5px" width="17" height="17" viewBox="0 0 20 20"><defs><linearGradient id="cpa" x1="0" y1="0" x2="1" y2="1"><stop offset="0" stop-color="#2fb0f0"/><stop offset=".5" stop-color="#5bd36a"/><stop offset="1" stop-color="#f3c22b"/></linearGradient><linearGradient id="cpb" x1="0" y1="0" x2="1" y2="1"><stop offset="0" stop-color="#8d5cf0"/><stop offset=".6" stop-color="#e0569a"/><stop offset="1" stop-color="#f08a3a"/></linearGradient></defs><path d="M7 1.500h4.500c1 0 1.800.6 2 1.500l.6 2.500H10L8 13c-.3 1-1 1.500-2 1.500H3c-1.300 0-2-1-1.700-2.200L3.800 3.500C4.200 2.200 5.500 1.500 7 1.500z" fill="url(#cpa)"/><path d="M13 18.500H8.500c-1 0-1.800-.6-2-1.500l-.6-2.500H10L12 7c.3-1 1-1.500 2-1.500h3c1.300 0 2 1 1.700 2.200l-2.500 8.800c-.4 1.300-1.700 2-3.200 2z" fill="url(#cpb)"/></svg>
<svg class="abs" style="left:343.5px;top:1056.5px" width="17" height="17" viewBox="0 0 20 20"><defs><linearGradient id="eg1" x1="0" y1="0" x2="1" y2="0"><stop offset="0" stop-color="#2aa7e8"/><stop offset="1" stop-color="#5fd66a"/></linearGradient></defs><circle cx="10" cy="10" r="9.500" fill="#1565c0"/><path d="M.6 9C1.200 4 5 .5 10 .5c5.500 0 9.500 4 9.500 8 0 3-2.300 4.500-4.500 4.500-2 0-3-1-3-1.800 0-.7.800-1 .8-2.500 0-2-2-3.700-4.800-3.700C5 5 2 6.500.6 9z" fill="url(#eg1)"/><path d="M7 19c-2.500-1.500-4-4-4-7 0-3 2-5.500 5-6-2 1.500-2.500 4-1.500 6.500 1 2.500 4 4.500 8 3.500-2 2.500-5 3.800-7.500 3z" fill="#0f4fa0"/></svg>
<svg class="abs" style="left:380.5px;top:1056.5px" width="17" height="17" viewBox="0 0 20 20"><circle cx="10" cy="10" r="9" fill="#fff"/><path d="M6.190 12.200L1.980 4.908A9.500 9.500 0 0 1 18.420 5.600L10 5.600z" fill="#e33b2e"/><path d="M10 5.600L18.420 5.600A9.500 9.500 0 0 1 9.600 19.492L13.810 12.200z" fill="#fbc116"/><path d="M13.810 12.200L9.600 19.492A9.500 9.500 0 0 1 1.980 4.908L6.190 12.200z" fill="#2da94f"/><circle cx="10" cy="10" r="4.400" fill="#fff"/><circle cx="10" cy="10" r="3.500" fill="#3f7de8"/></svg>
<svg class="abs" style="left:417.5px;top:1057.5px" width="17" height="15" viewBox="0 0 20 18"><path d="M.5 2.500c0-.6.400-1 1-1h5l1.500 2h10.500c.6 0 1 .4 1 1V16H.5z" fill="#f6b73c"/><path d="M.5 5.500h19V16c0 .6-.4 1-1 1H1.500c-.6 0-1-.4-1-1z" fill="#ffd86b"/><path d="M4.500 17v-5.500c0-.6.400-1 1-1h9c.6 0 1 .4 1 1V17h-3v-3.500h-5V17z" fill="#3a8edb"/></svg>
<svg class="abs" style="left:455.5px;top:1056.5px" width="16" height="17" viewBox="0 0 19 20"><path d="M4.500 3h12l-1.600 14h-12z" fill="#bfe6f5" stroke="#8fb7c9" stroke-width=".7"/><path d="M14.900 17l1.600-14 1 .8-1.500 14z" fill="#f3efe2"/><path d="M2.900 17h12l1.100 .8H4z" fill="#f7f4ea"/><path d="M4.700 6h11M4.500 8h11M4.300 10h11M4 12h11M3.800 14h11" stroke="#8cc3dc" stroke-width=".7"/><path d="M5.500 1.500v2.300M7.500 1.500v2.300M9.500 1.500v2.300M11.500 1.500v2.300M13.500 1.500v2.300M15.500 1.500v2.300" stroke="#dfe6ea" stroke-width="1"/></svg>
<svg class="abs" style="left:1761px;top:1059px" width="14" height="10" viewBox="0 0 14 10"><path d="M1.500 8l5.500-5.500L12.500 8" fill="none" stroke="#fff" stroke-width="1.300"/></svg>
<svg class="abs" style="left:1783px;top:1057px" width="18" height="16" viewBox="0 0 18 16"><path d="M1.500 5.500h2.500l3.500-3.500v12L4 10.500H1.500z" fill="none" stroke="#fff" stroke-width="1.100"/><path d="M9.500 5.800c.9 1.300.9 3.100 0 4.400M11.500 4c1.700 2.300 1.700 5.700 0 8M13.600 2.300c2.500 3.300 2.500 8.100 0 11.400" fill="none" stroke="#fff" stroke-width="1.100"/></svg>
<svg class="abs" style="left:1807px;top:1058px" width="18" height="15" viewBox="0 0 18 15"><path d="M5.500 1.500h11v8.500h-11z" fill="none" stroke="#fff" stroke-width="1.100"/><path d="M8 13.500h6M11 10v3.500" stroke="#fff" stroke-width="1.100"/><path d="M1 1h4.500v3.500H1zM3.200 4.500V13.500" fill="none" stroke="#fff" stroke-width="1.100"/></svg>
<span class="t" style="left:1834.0px;top:1060px;font-size:12px;letter-spacing:-0.61px;color:#fff;">22:46</span>
<svg class="abs" style="left:1878px;top:1057px" width="18" height="17" viewBox="0 0 18 17"><path d="M1 .5h15v11.500H8.500L6 14.500V12H1z" fill="#fff"/><path d="M3.500 3.500h10M3.500 6h10M3.500 8.500h7" stroke="#1b2943" stroke-width="1.100"/><circle cx="13.500" cy="12.500" r="2.600" fill="#1b2943" stroke="#fff" stroke-width="1"/><path d="M12.300 13.500l2.500-2" stroke="#fff" stroke-width=".9"/></svg>
<div class="abs" style="left:1915px;top:1050px;width:1px;height:30px;background:#8a93a3;"></div>
</div>
</body>
</html>
